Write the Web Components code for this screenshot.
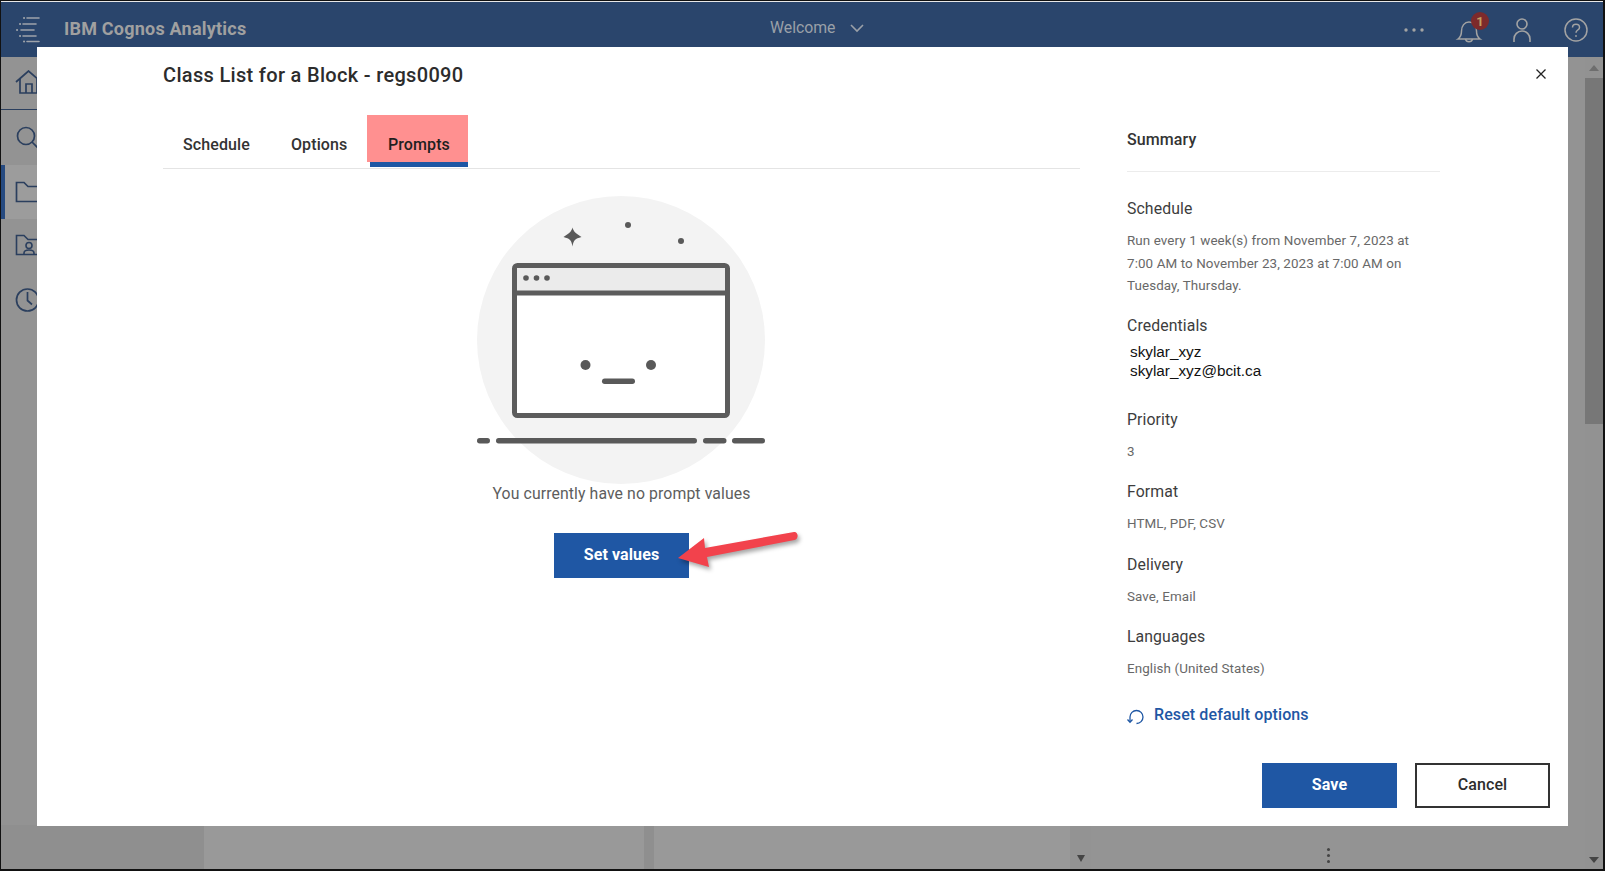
<!DOCTYPE html>
<html><head><meta charset="utf-8"><title>IBM Cognos Analytics</title>
<style>
html,body{margin:0;padding:0;width:1605px;height:871px;overflow:hidden;background:#000}
body{font-family:"Roboto","Liberation Sans",sans-serif}
</style></head><body>
<app-shell>
  <app-header slot="header" title-text="IBM Cognos Analytics" center-text="Welcome"></app-header>
  <app-sidebar slot="sidebar"></app-sidebar>
  <app-content slot="content"></app-content>
  <page-scrollbar slot="scroll"></page-scrollbar>
  <schedule-dialog slot="dialog" heading="Class List for a Block - regs0090">
    <tab-bar slot="tabs"></tab-bar>
    <empty-state slot="main" message="You currently have no prompt values" action="Set values"></empty-state>
    <summary-panel slot="side">
      <summary-item label="Schedule">Run every 1 week(s) from November 7, 2023 at 7:00 AM to November 23, 2023 at 7:00 AM on Tuesday, Thursday.</summary-item>
      <summary-item label="Credentials" kind="cred">skylar_xyz<br>skylar_xyz@bcit.ca</summary-item>
      <summary-item label="Priority">3</summary-item>
      <summary-item label="Format">HTML, PDF, CSV</summary-item>
      <summary-item label="Delivery">Save, Email</summary-item>
      <summary-item label="Languages">English (United States)</summary-item>
    </summary-panel>
  </schedule-dialog>
</app-shell>
<script>
function def(name, css, html){
  customElements.define(name, class extends HTMLElement{
    constructor(){super();this.attachShadow({mode:'open'});}
    connectedCallback(){
      const a=n=>this.getAttribute(n)||'';
      this.shadowRoot.innerHTML='<style>'+css+'</style>'+(typeof html==='function'?html(a):html);
    }
  });
}
const FONT='"Roboto","Liberation Sans",sans-serif';

def('app-shell',`
:host{display:block;width:1605px;height:871px;box-sizing:border-box;position:relative;border:1px solid #111;border-bottom-width:2px;border-right-width:2px;background:#939393}
.grid{display:grid;grid-template-columns:1fr 18px;grid-template-rows:1px 55px 1fr;height:100%}
.line{grid-column:1/3;background:#e8e8e8}
.h{grid-column:1/3}
.body{display:grid;grid-template-columns:1fr;min-height:0}
.side{position:absolute;left:0;top:56px;bottom:0;width:36px}
`,`<div class="grid"><div class="line"></div><div class="h"><slot name="header"></slot></div>
<div class="body"><slot name="content"></slot></div><slot name="scroll"></slot></div>
<div class="side"><slot name="sidebar"></slot></div><slot name="dialog"></slot>`);

def('app-header',`
:host{display:flex;align-items:center;height:55px;background:#2a456c;color:#a3a3a3;position:relative}
svg{display:block;flex:none;overflow:visible}
.menu{margin-left:14px}
.t{margin-left:21px;font:700 18px/24px ${FONT};color:#a0a0a0;margin-top:-1px;letter-spacing:.22px}
.c{position:absolute;left:769px;top:15px;display:flex;align-items:center;gap:14px;font:400 15.8px/22px ${FONT};color:#9aa0a8}
.r{margin-left:auto;display:flex;align-items:center}
`,a=>`<svg class="menu" width="28" height="28" viewBox="0 0 28 28" fill="none" stroke="#9ea3aa" stroke-width="1.6" stroke-linecap="round">
<path d="M12 2h12M8 8h13M6 14h13M8 20h13M12 25.500h12"/><path d="M5 8h.1M2 14h.1M5 20h.1M9 25.500h.1M9 2h.1" stroke-width="2"/></svg>
<span class="t">${a('title-text')}</span>
<span class="c">${a('center-text')}<svg width="14" height="8" viewBox="0 0 14 8" fill="none" stroke="#9aa0a8" stroke-width="1.6"><path d="M1 1l6 6 6-6"/></svg></span>
<div class="r">
<svg width="22" height="6" viewBox="0 0 22 6" fill="#a3a3a3" style="margin-right:27px"><circle cx="3" cy="3" r="1.7"/><circle cx="11" cy="3" r="1.7"/><circle cx="19" cy="3" r="1.7"/></svg>
<svg width="36" height="36" viewBox="0 0 36 36" fill="none" stroke="#a3a3a3" stroke-width="1.5" style="margin-right:24px"><path d="M6 27c3-2 3.500-4 3.500-8 0-5 3-9 7.500-9s7.500 4 7.500 9c0 4 .5 6 3.500 8z"/><path d="M13.500 27a3.600 3.600 0 0 0 7 0"/><circle cx="28" cy="9" r="9" fill="#7d2a2b" stroke="none"/><text x="28" y="13.500" text-anchor="middle" font-family="Roboto" font-weight="700" font-size="13" fill="#c2a060" stroke="none">1</text></svg>
<svg width="20" height="28" viewBox="0 0 20 28" fill="none" stroke="#a3a3a3" stroke-width="1.6" style="margin-right:32px"><circle cx="10" cy="8" r="5"/><path d="M2 26v-3a8 8 0 0 1 16 0v3"/></svg>
<svg width="24" height="24" viewBox="0 0 24 24" fill="none" stroke="#a3a3a3" stroke-width="1.5" style="margin-right:15px"><circle cx="12" cy="12" r="11"/><path d="M8.500 9.500c0-2 1.500-3.200 3.500-3.200s3.500 1.300 3.500 3.100c0 2.600-3.500 2.600-3.500 5.300"/><circle cx="12" cy="18" r=".9" fill="#a3a3a3" stroke="none"/></svg>
</div>`);

def('app-sidebar',`
:host{display:block;height:100%;overflow:hidden}
.i{height:54px;display:flex;align-items:center;padding-left:14px;box-sizing:border-box;position:relative}
.home{height:53px;border-bottom:1px solid #2b3f5e}
.sel{background:#9c9c9c}
.sel::before{content:"";position:absolute;left:0;top:0;bottom:0;width:4px;background:#264a80}
svg{flex:none;display:block}
`,`<div class="i home"><svg width="30" height="26" viewBox="0 0 30 26" fill="none" stroke="#2b3f5e" stroke-width="1.7"><path d="M1 12L13.500 1 26 12"/><path d="M5 9v14h17V9"/><path d="M11 23v-9h6v9"/></svg></div>
<div class="i" style="height:55px"><svg width="30" height="28" viewBox="0 0 30 28" fill="none" stroke="#2b3f5e" stroke-width="1.7"><circle cx="11" cy="12" r="8.500"/><path d="M17 18l7 7"/></svg></div>
<div class="i sel"><svg width="30" height="22" viewBox="0 0 30 22" fill="none" stroke="#2b3f5e" stroke-width="1.7"><path d="M30 20.500H1.500V1.500H9L13 5.500H30"/></svg></div>
<div class="i"><svg width="30" height="24" viewBox="0 0 30 24" fill="none" stroke="#2b3f5e" stroke-width="1.6"><path d="M30 20.500H1.500V1.500H9L13 5.500H30"/><circle cx="14" cy="11.500" r="3"/><path d="M9 20.500v-1.500c0-2 2-3 5-3s5 1 5 3v1.500"/></svg></div>
<div class="i"><svg width="30" height="26" viewBox="0 0 30 26" fill="none" stroke="#2b3f5e" stroke-width="1.7"><circle cx="12.500" cy="13" r="11"/><path d="M12.500 5v8.500l4.500 4"/></svg></div>`);

def('app-content',`
:host{display:flex;flex-direction:column;justify-content:flex-end;height:100%;min-height:0;background:#939393}
.row{display:flex;height:44px;padding-left:203px;background:#8f8f8f}
.card{background:#999;position:relative}
.a{width:440px;margin-right:10px}
.b{width:416px}
.s{width:21px;background:#939393;position:relative}
.s::after{content:"";position:absolute;left:7px;bottom:7px;border:4.500px solid transparent;border-top:7px solid #444;border-bottom:0}
.c{width:259px;background:#949494}
.d{flex:1;background:#939393}
.k{position:absolute;left:236px;bottom:6px;width:3px;height:3px;border-radius:50%;background:#444;box-shadow:0 -6px 0 #444,0 -12px 0 #444}
`,`<div class="row"><div class="card a"></div><div class="card b"></div><div class="s"></div><div class="card c"><span class="k"></span></div><div class="d"></div></div>`);

def('page-scrollbar',`
:host{display:flex;flex-direction:column;align-items:center;background:#929292;height:100%;position:relative}
.u,.dn{width:0;height:0;border:5px solid transparent}
.u{border-bottom:6px solid #6e6e6e;border-top:0;margin-top:8px}
.th{width:100%;height:346px;background:#777;margin-top:7px}
.dn{border-top:6px solid #444;border-bottom:0;position:absolute;bottom:6px}
`,`<div class="u"></div><div class="th"></div><div class="dn"></div>`);

def('schedule-dialog',`
:host{position:absolute;left:36px;top:46px;width:1531px;height:779px;background:#fff;display:grid;grid-template-rows:1fr auto;color:#2d2d2d}
.top{display:flex;min-height:0}
.left{width:917px;margin-left:126px;flex:none}
h1{margin:14px 0 25px;font:500 20px/28px ${FONT};color:#2c2c2c;letter-spacing:.32px}
.right{width:313px;margin-left:47px;flex:none}
.foot{display:flex;justify-content:flex-end;gap:18px;padding:0 18px 18px}
.close{position:absolute;right:20px;top:20px;width:14px;height:14px}
`,a=>`<div class="top"><div class="left"><h1>${a('heading')}</h1><slot name="tabs"></slot><slot name="main"></slot></div>
<div class="right"><slot name="side"></slot></div></div>
<div class="foot"><ui-button kind="primary">Save</ui-button><ui-button kind="outline">Cancel</ui-button></div>
<svg class="close" viewBox="0 0 14 14" fill="none" stroke="#222" stroke-width="1.3"><path d="M2.500 2.500l9 9M11.500 2.500l-9 9"/></svg>`);

def('tab-bar',`
:host{display:flex;align-items:flex-end;height:54px;border-bottom:1px solid #e4e4e4;box-sizing:content-box;font:500 16px/20px ${FONT}}
.t{height:47px;box-sizing:border-box;padding-top:20px;text-align:left;color:#333;margin-bottom:6px;padding-left:20px;letter-spacing:.1px}
.p{position:relative;background:#ff9090;color:#1f1f1f;width:101px;padding-left:21px}
.p::after{content:"";position:absolute;left:3px;right:0;top:47px;height:5px;background:#1f57a4}
`,`<div class="t" style="width:108px">Schedule</div><div class="t" style="width:96px">Options</div><div class="t p">Prompts</div>`);

def('empty-state',`
:host{display:flex;flex-direction:column;align-items:center;padding-top:27px}
svg.art{display:block;margin-left:-2px}
p{margin:0 0 29px;font:400 15.8px/20px ${FONT};color:#5d5d5d;letter-spacing:.1px}
.w{position:relative}
.arrow{position:absolute;left:116px;top:-12px;overflow:visible}
`,a=>`<svg class="art" width="288" height="288" viewBox="0 0 288 288">
<circle cx="144" cy="144" r="144" fill="#f3f3f3"/>
<path d="M95.500 31.500c1.200 4 2.500 5.300 9 9.500-6.500 1.700-7.800 3-9 9.500-1.200-6.500-2.500-7.800-9-9.500 6.500-4.200 7.800-5.500 9-9.500z" fill="#595959"/>
<circle cx="151" cy="29" r="3" fill="#595959"/><circle cx="204" cy="45" r="3" fill="#595959"/>
<rect x="37.500" y="69.500" width="213" height="150" rx="3" fill="#fff" stroke="#5c5c5c" stroke-width="5"/>
<path d="M40 72h208v23H40z" fill="#ebebeb"/><path d="M37 97h214" stroke="#5c5c5c" stroke-width="5"/>
<circle cx="49" cy="82" r="2.800" fill="#595959"/><circle cx="59.500" cy="82" r="2.800" fill="#595959"/><circle cx="70" cy="82" r="2.800" fill="#595959"/>
<circle cx="108.500" cy="169" r="5" fill="#595959"/><circle cx="174" cy="169" r="5" fill="#595959"/>
<rect x="125" y="182.500" width="33" height="5.500" rx="2.700" fill="#595959"/>
<g fill="#595959"><rect x="0" y="242" width="13" height="5.500" rx="2.700"/><rect x="19" y="242" width="201" height="5.500" rx="2.700"/><rect x="226" y="242" width="23.500" height="5.500" rx="2.700"/><rect x="255" y="242" width="33" height="5.500" rx="2.700"/></g>
</svg><p>${a('message')}</p>
<div class="w"><ui-button kind="primary">${a('action')}</ui-button>
<svg class="arrow" width="135" height="60" viewBox="0 0 135 60" style="filter:drop-shadow(2px 3px 2px rgba(0,0,0,.35))">
<path d="M8 37L34 17l1 10 89-16c4.500-.5 5 7 .5 8L37 36l2 10z" fill="#f2424c"/></svg></div>`);

def('ui-button',`
:host{display:inline-flex;align-items:center;justify-content:center;width:135px;height:45px;box-sizing:border-box;font:500 16px/20px ${FONT};letter-spacing:.1px;padding-bottom:2px}
:host([kind=primary]){background:#1f57a4;color:#fff;font-weight:700}
:host([kind=outline]){background:#fff;color:#2d2d2d;border:2px solid #333}
`,`<slot></slot>`);

def('summary-panel',`
:host{display:block;padding-top:83px}
.h{font:500 16px/20px ${FONT};color:#333;padding-bottom:21px;border-bottom:1px solid #ececec;margin-bottom:27px;letter-spacing:.1px}
.r{display:flex;align-items:center;gap:10px;margin-top:25px;font:500 16px/20px ${FONT};color:#1f57a4;letter-spacing:.1px}
svg{display:block;flex:none;margin-left:1px;margin-top:3px;overflow:visible}
`,`<div class="h">Summary</div><slot></slot>
<div class="r"><svg width="16" height="16" viewBox="0 0 16 16" fill="none" stroke="#1f57a4" stroke-width="1.3"><path d="M8.500 14.500A6.500 6.500 0 1 0 2 8V13"/><path d="M-.5 10.500l2.500 2.800 2.500-2.800"/></svg>Reset default options</div>`);

def('summary-item',`
:host{display:block;margin-bottom:18.7px}
.l{font:400 15.8px/20px ${FONT};color:#3d3d3d;margin-bottom:11px;letter-spacing:.1px}
.v{font:400 13.4px/22.500px ${FONT};color:#686868;letter-spacing:.1px;padding-right:18px}
:host([kind=cred]) .l{margin-bottom:7px}
:host([kind=cred]) .v{font:400 15.3px/18.500px "Liberation Sans",sans-serif;color:#111;padding-left:3px;margin-bottom:30px;letter-spacing:0}
`,a=>`<div class="l">${a('label')}</div><div class="v"><slot></slot></div>`);
</script>
</body></html>
